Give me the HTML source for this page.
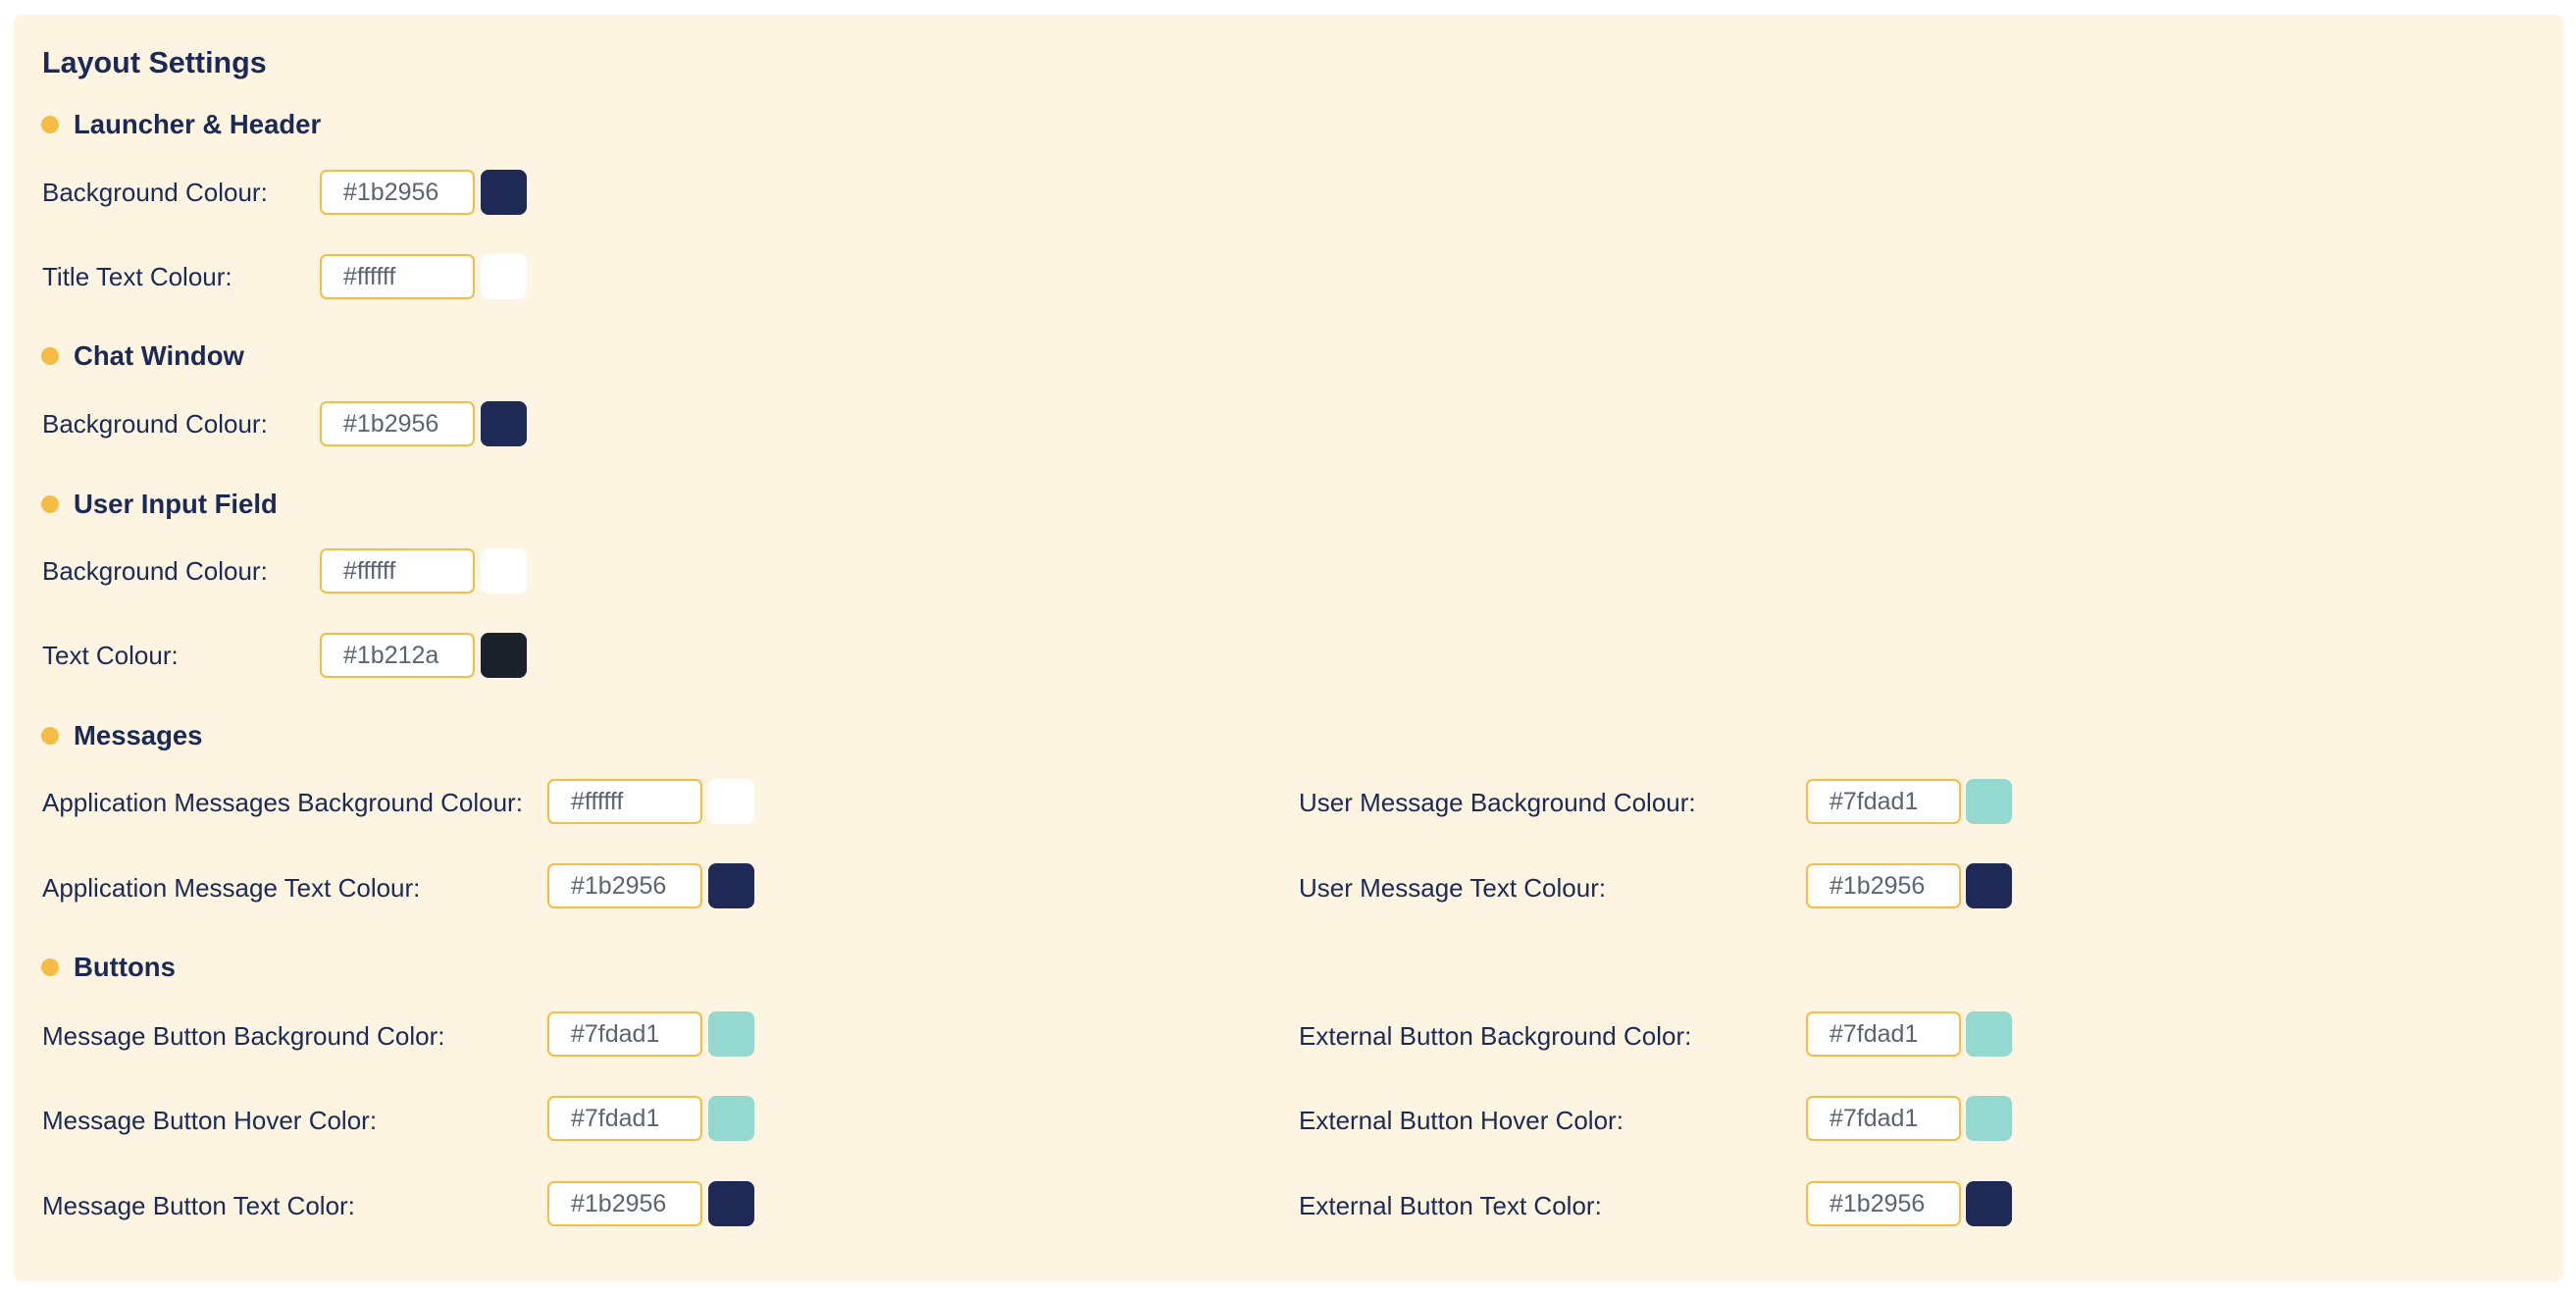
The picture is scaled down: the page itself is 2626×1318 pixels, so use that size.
<!DOCTYPE html>
<html><head><meta charset="utf-8"><style>
*{margin:0;padding:0;box-sizing:border-box}
body{width:2626px;height:1318px;background:#fff;position:relative;overflow:hidden;font-family:"Liberation Sans",sans-serif;color:#1b2956}
.panel{position:absolute;left:14px;top:15px;width:2599px;height:1291px;background:#fdf5e2;border-radius:8px}
.t{position:absolute;left:43px;top:46px;font-size:30.5px;font-weight:bold;line-height:36px}
.h{position:absolute;left:75px;font-size:27.5px;font-weight:bold;line-height:32px;transform:translateY(-50%)}
.d{position:absolute;left:42px;width:18px;height:18px;border-radius:50%;background:#f5bd45;transform:translateY(-50%)}
.l{position:absolute;font-size:26px;line-height:30px;transform:translateY(-50%)}
.i{position:absolute;width:158px;height:46px;border:2.5px solid #f5bd45;border-radius:7px;background:#fff;font-size:25px;color:#5b6472;padding-left:22px;line-height:43px;transform:translateY(-50%)}
.s{position:absolute;width:47px;height:46px;border-radius:8px;transform:translateY(-50%)}
</style></head><body>
<div class="panel"></div>
<div class="t">Layout Settings</div>

<div class="d" style="top:127px"></div><div class="h" style="top:127px">Launcher &amp; Header</div>
<div class="l" style="left:43px;top:196px">Background Colour:</div><div class="i" style="left:326px;top:196px">#1b2956</div><div class="s" style="left:490px;top:196px;background:#1e2955"></div>
<div class="l" style="left:43px;top:282px">Title Text Colour:</div><div class="i" style="left:326px;top:282px">#ffffff</div><div class="s" style="left:490px;top:282px;background:#fff"></div>

<div class="d" style="top:363px"></div><div class="h" style="top:363px">Chat Window</div>
<div class="l" style="left:43px;top:432px">Background Colour:</div><div class="i" style="left:326px;top:432px">#1b2956</div><div class="s" style="left:490px;top:432px;background:#1e2955"></div>

<div class="d" style="top:514px"></div><div class="h" style="top:514px">User Input Field</div>
<div class="l" style="left:43px;top:582px">Background Colour:</div><div class="i" style="left:326px;top:582px">#ffffff</div><div class="s" style="left:490px;top:582px;background:#fff"></div>
<div class="l" style="left:43px;top:668px">Text Colour:</div><div class="i" style="left:326px;top:668px">#1b212a</div><div class="s" style="left:490px;top:668px;background:#1b212a"></div>

<div class="d" style="top:750px"></div><div class="h" style="top:750px">Messages</div>
<div class="l" style="left:43px;top:818px">Application Messages Background Colour:</div><div class="i" style="left:558px;top:817px">#ffffff</div><div class="s" style="left:722px;top:817px;background:#fff"></div>
<div class="l" style="left:43px;top:905px">Application Message Text Colour:</div><div class="i" style="left:558px;top:903px">#1b2956</div><div class="s" style="left:722px;top:903px;background:#1e2955"></div>
<div class="l" style="left:1324px;top:818px">User Message Background Colour:</div><div class="i" style="left:1841px;top:817px">#7fdad1</div><div class="s" style="left:2004px;top:817px;background:#95d8d0"></div>
<div class="l" style="left:1324px;top:905px">User Message Text Colour:</div><div class="i" style="left:1841px;top:903px">#1b2956</div><div class="s" style="left:2004px;top:903px;background:#1e2955"></div>

<div class="d" style="top:986px"></div><div class="h" style="top:986px">Buttons</div>
<div class="l" style="left:43px;top:1056px">Message Button Background Color:</div><div class="i" style="left:558px;top:1054px">#7fdad1</div><div class="s" style="left:722px;top:1054px;background:#95d8d0"></div>
<div class="l" style="left:43px;top:1142px">Message Button Hover Color:</div><div class="i" style="left:558px;top:1140px">#7fdad1</div><div class="s" style="left:722px;top:1140px;background:#95d8d0"></div>
<div class="l" style="left:43px;top:1229px">Message Button Text Color:</div><div class="i" style="left:558px;top:1227px">#1b2956</div><div class="s" style="left:722px;top:1227px;background:#1e2955"></div>
<div class="l" style="left:1324px;top:1056px">External Button Background Color:</div><div class="i" style="left:1841px;top:1054px">#7fdad1</div><div class="s" style="left:2004px;top:1054px;background:#95d8d0"></div>
<div class="l" style="left:1324px;top:1142px">External Button Hover Color:</div><div class="i" style="left:1841px;top:1140px">#7fdad1</div><div class="s" style="left:2004px;top:1140px;background:#95d8d0"></div>
<div class="l" style="left:1324px;top:1229px">External Button Text Color:</div><div class="i" style="left:1841px;top:1227px">#1b2956</div><div class="s" style="left:2004px;top:1227px;background:#1e2955"></div>
</body></html>
